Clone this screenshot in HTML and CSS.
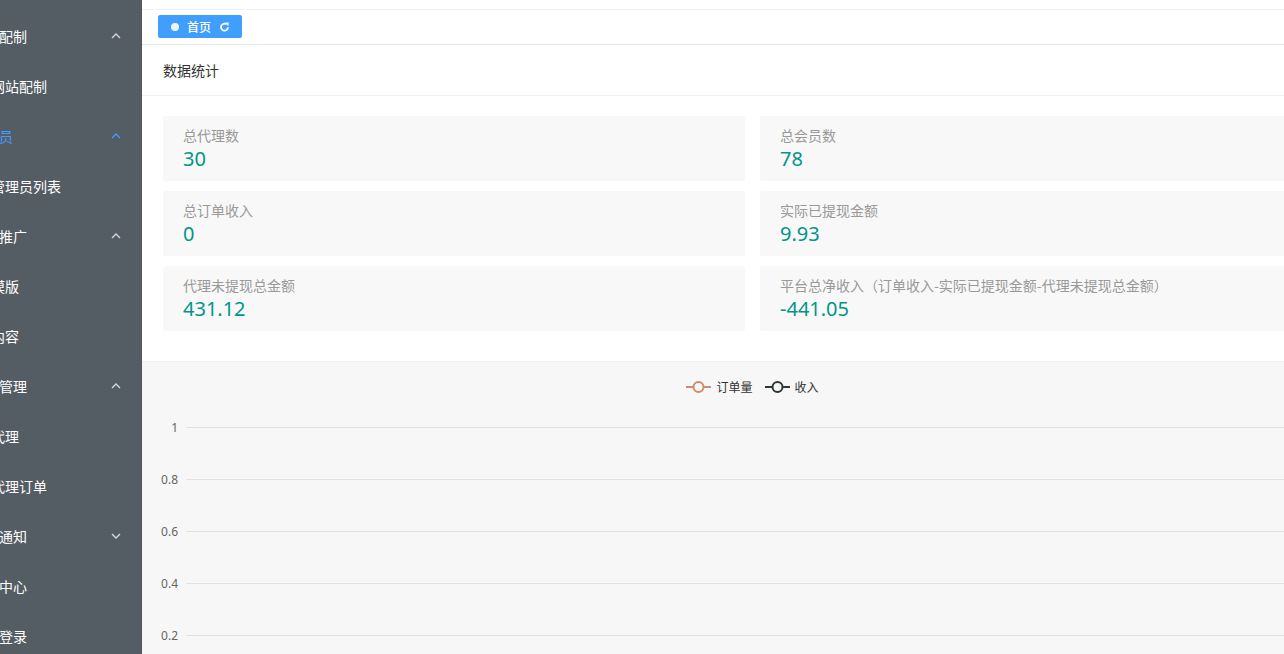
FILE: index.html
```html
<!DOCTYPE html>
<html lang="zh-CN">
<head>
<meta charset="utf-8">
<title>数据统计</title>
<link rel="stylesheet" href="styles.css">
</head>
<body>
<div class="app">
  <aside class="sidebar">
    <ul class="menu">
      <li class="menu-item title">系统配制<svg class="arrow" viewBox="0 0 12 12"><path d="M2 8 L6 4 L10 8"/></svg></li>
      <li class="menu-item sub">网站配制</li>
      <li class="menu-item title active">管理员<svg class="arrow" viewBox="0 0 12 12"><path d="M2 8 L6 4 L10 8"/></svg></li>
      <li class="menu-item sub">管理员列表</li>
      <li class="menu-item title">分销推广<svg class="arrow" viewBox="0 0 12 12"><path d="M2 8 L6 4 L10 8"/></svg></li>
      <li class="menu-item sub sub-wide">推模版</li>
      <li class="menu-item sub">内容</li>
      <li class="menu-item title">代理管理<svg class="arrow" viewBox="0 0 12 12"><path d="M2 8 L6 4 L10 8"/></svg></li>
      <li class="menu-item sub">代理</li>
      <li class="menu-item sub">代理订单</li>
      <li class="menu-item title">系统通知<svg class="arrow" viewBox="0 0 12 12"><path d="M2 4 L6 8 L10 4"/></svg></li>
      <li class="menu-item title">个人中心</li>
      <li class="menu-item title">退出登录</li>
    </ul>
  </aside>

  <main class="main">
    <div class="topstrip"></div>
    <div class="tabs">
      <div class="tab">
        <span class="tab-dot"></span>
        <span class="tab-label">首页</span>
        <svg class="tab-refresh" viewBox="0 0 12 12"><path class="ring" d="M9.8 6.8 A3.8 3.8 0 1 1 8.2 3.6"/><path class="head" d="M6.6 1.6 L10.6 1.6 L10.2 5.6 Z"/></svg>
      </div>
    </div>

    <section class="card">
      <header class="card-header">数据统计</header>
      <div class="card-body">
        <div class="stats">
          <div class="stat"><div class="stat-label">总代理数</div><div class="stat-value">30</div></div>
          <div class="stat"><div class="stat-label">总会员数</div><div class="stat-value">78</div></div>
          <div class="stat"><div class="stat-label">总订单收入</div><div class="stat-value">0</div></div>
          <div class="stat"><div class="stat-label">实际已提现金额</div><div class="stat-value">9.93</div></div>
          <div class="stat"><div class="stat-label">代理未提现总金额</div><div class="stat-value">431.12</div></div>
          <div class="stat"><div class="stat-label">平台总净收入（订单收入-实际已提现金额-代理未提现总金额）</div><div class="stat-value">-441.05</div></div>
        </div>
      </div>
    </section>

    <section class="chart">
      <div class="legend">
        <span class="legend-item">
          <svg class="legend-icon" viewBox="0 0 25 14"><line x1="0" y1="7" x2="25" y2="7" class="l-orders"/><circle cx="12.5" cy="7" r="5" class="c-orders"/></svg>
          订单量
        </span>
        <span class="legend-item">
          <svg class="legend-icon" viewBox="0 0 25 14"><line x1="0" y1="7" x2="25" y2="7" class="l-income"/><circle cx="12.5" cy="7" r="5" class="c-income"/></svg>
          收入
        </span>
      </div>
      <div class="axis">
        <div class="axis-row"><span class="axis-label">1</span><span class="axis-line"></span></div>
        <div class="axis-row"><span class="axis-label">0.8</span><span class="axis-line"></span></div>
        <div class="axis-row"><span class="axis-label">0.6</span><span class="axis-line"></span></div>
        <div class="axis-row"><span class="axis-label">0.4</span><span class="axis-line"></span></div>
        <div class="axis-row"><span class="axis-label">0.2</span><span class="axis-line"></span></div>
      </div>
    </section>
  </main>
</div>
</body>
</html>
```
FILE: styles.css
```css
* {
  box-sizing: border-box;
}

html, body {
  margin: 0;
  padding: 0;
  height: 100%;
  overflow: hidden;
  background: #fff;
  font-family: "Noto Sans", "Noto Sans CJK SC", sans-serif;
  font-size: 14px;
  color: #333;
}

.app {
  display: flex;
  height: 100vh;
}

/* ---- side navigation (scrolled horizontally) ---- */
.sidebar {
  flex: 0 0 142px;
  width: 142px;
  height: 100%;
  background: #545c64;
  overflow: hidden;
  border-right: 1px solid #4e555c;
}

.menu {
  list-style: none;
  margin: 0 0 0 -49px;
  padding: 11px 0 0;
  width: 191px;
}

.menu-item {
  position: relative;
  height: 50px;
  line-height: 50px;
  color: #fff;
  font-family: "Noto Sans CJK SC", sans-serif;
  font-size: 14px;
  white-space: nowrap;
}

.menu-item.title {
  padding-left: 20px;
}

.menu-item.sub {
  padding-left: 40px;
}

.menu-item.sub-wide {
  padding-left: 26px;
}

.menu-item.active {
  color: #409eff;
}

.arrow {
  position: absolute;
  right: 20px;
  top: 19px;
  width: 12px;
  height: 12px;
  fill: none;
  stroke: #d6d9dc;
  stroke-width: 1.4;
}

.menu-item.active .arrow {
  stroke: #409eff;
}

/* ---- main area ---- */
.main {
  flex: 0 0 1221px;
  width: 1221px;
  height: 100%;
  overflow: hidden;
  background: #fff;
}

.topstrip {
  height: 10px;
  border-bottom: 1px solid #f0f0f0;
}

.tabs {
  height: 35px;
  padding: 5px 0 0 16px;
  border-bottom: 1px solid #e8e8e8;
}

.tab {
  display: inline-flex;
  align-items: center;
  height: 23px;
  padding: 0 12px 0 13px;
  background: #409eff;
  border-radius: 2px;
  color: #fff;
  font-family: "Noto Sans CJK SC", sans-serif;
  font-size: 12px;
}

.tab-dot {
  width: 8px;
  height: 8px;
  border-radius: 50%;
  background: #eaf4ff;
  margin-right: 8px;
}

.tab-label {
  font-weight: 500;
  margin-right: 8px;
}

.tab-refresh {
  width: 11px;
  height: 11px;
}

.tab-refresh .ring {
  fill: none;
  stroke: #fff;
  stroke-width: 2;
}

.tab-refresh .head {
  fill: #fff;
}

/* ---- statistics card ---- */
.card-header {
  height: 51px;
  line-height: 50px;
  padding: 0 21px;
  border-bottom: 1px solid #f0f0f0;
  font-family: "Noto Sans CJK SC", sans-serif;
  font-size: 14px;
  color: #333;
}

.card-body {
  padding: 20px 21px 30px;
}

.stats {
  display: grid;
  grid-template-columns: 582px 582px;
  column-gap: 15px;
  row-gap: 10px;
}

.stat {
  height: 65px;
  padding: 9px 20px 10px;
  background: #f8f8f8;
  border-radius: 2px;
}

.stat-label {
  height: 21px;
  line-height: 20px;
  font-family: "Noto Sans CJK SC", sans-serif;
  font-size: 14px;
  color: #999;
  white-space: nowrap;
}

.stat-value {
  height: 25px;
  line-height: 25px;
  font-size: 20px;
  color: #009688;
}

/* ---- line chart ---- */
.chart {
  height: 300px;
  background: #f7f7f7;
  border-top: 1px solid #f1f1f1;
  padding-top: 15px;
}

.legend {
  display: flex;
  justify-content: center;
  gap: 12px;
  height: 20px;
  line-height: 20px;
  font-family: "Noto Sans CJK SC", sans-serif;
  font-size: 12px;
  color: #333;
}

.legend-item {
  display: inline-flex;
  align-items: center;
  gap: 5px;
}

.legend-icon {
  width: 25px;
  height: 14px;
}

.l-orders, .c-orders {
  stroke: #cf8b6d;
  stroke-width: 2;
}

.l-income, .c-income {
  stroke: #2f3436;
  stroke-width: 2;
}

.c-orders, .c-income {
  fill: #f7f7f7;
}

.axis {
  display: flex;
  flex-direction: column;
  gap: 32px;
  margin-top: 20px;
}

.axis-row {
  display: flex;
  align-items: center;
  height: 20px;
}

.axis-label {
  width: 36px;
  text-align: right;
  font-size: 12px;
  color: #666;
  margin-right: 8px;
}

.axis-line {
  flex: 1;
  height: 1px;
  background: #e3e3e3;
}
```
